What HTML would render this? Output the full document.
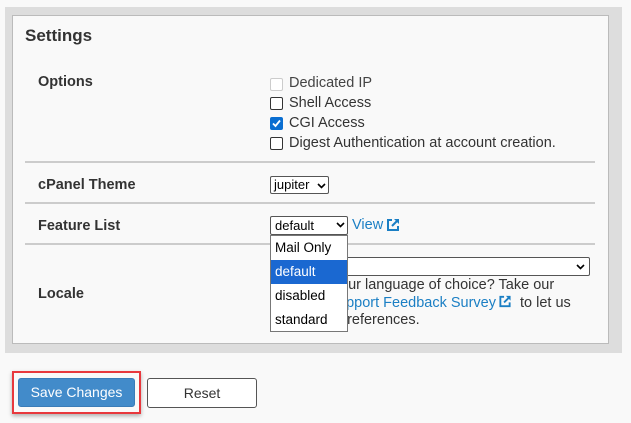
<!DOCTYPE html>
<html><head><style>
*{margin:0;padding:0;box-sizing:border-box}
body{width:631px;height:423px;background:#f9f9f9;font-family:"Liberation Sans",sans-serif;color:#333;position:relative;overflow:hidden}
.a{position:absolute;white-space:nowrap}
.t{font-size:14.5px;color:#333}
.b{font-weight:bold;font-size:14.5px;color:#333}
.cb{position:absolute;width:13px;height:13px;border:1px solid #333;border-radius:2px;background:#fff}
.ln{position:absolute;left:25px;width:570px;height:2px;background:#ccc}
.lk{color:#1b7fc4}
</style></head><body>
<div class="a" style="left:5px;top:7px;width:617px;height:346px;background:#ddd"></div>
<div class="a" style="left:12px;top:15px;width:597px;height:329px;background:#f9f9f9;border:1px solid #bbb"></div>
<div class="a b" style="left:25px;top:26px;font-size:17px">Settings</div>
<div class="a b" style="left:38px;top:74px">Options</div>
<div class="cb" style="left:270px;top:78px;border-color:#ccc"></div>
<div class="a t" style="left:289px;top:75px;color:#444">Dedicated IP</div>
<div class="cb" style="left:270px;top:97px"></div>
<div class="a t" style="left:289px;top:95px">Shell Access</div>
<div class="cb" style="left:270px;top:117px;background:#0a6ed1;border-color:#0a6ed1"><svg width="11" height="11" viewBox="0 0 11 11" style="position:absolute;left:0;top:0"><path d="M2 5.5L4.5 8L9 2.5" stroke="#fff" stroke-width="1.8" fill="none"/></svg></div>
<div class="a t" style="left:289px;top:115px">CGI Access</div>
<div class="cb" style="left:270px;top:137px"></div>
<div class="a t" style="left:289px;top:135px">Digest Authentication at account creation.</div>
<div class="ln" style="top:161px"></div>
<div class="a b" style="left:38px;top:177px">cPanel Theme</div>
<div class="a" style="left:270px;top:176px;width:59px;height:18px;border:1px solid #555;border-radius:2px;background:#fff;font-size:13px;color:#000;padding-left:3px;line-height:16px">jupiter</div>
<svg class="a" style="left:317px;top:183px" width="9" height="6"><path d="M1 1L4.5 4.5L8 1" stroke="#000" stroke-width="1.6" fill="none"/></svg>
<div class="ln" style="top:202px"></div>
<div class="a b" style="left:38px;top:218px">Feature List</div>
<div class="a" style="left:270px;top:216px;width:78px;height:19px;border:1px solid #555;border-radius:2px;background:#fff;font-size:13px;color:#000;padding-left:4px;line-height:17px">default</div>
<svg class="a" style="left:336px;top:222px" width="9" height="6"><path d="M1 1L4.5 4.5L8 1" stroke="#000" stroke-width="1.6" fill="none"/></svg>
<div class="a t lk" style="left:352px;top:217px">View</div>
<svg class="a" style="left:386px;top:218px" width="14" height="14" viewBox="0 0 14 14"><path d="M6 2H2V12H12V8" stroke="#1b7fc4" stroke-width="2" fill="none"/><path d="M8 1H13V6Z" fill="#1b7fc4"/><path d="M12 2L6 8" stroke="#1b7fc4" stroke-width="2"/></svg>
<div class="ln" style="top:243px"></div>
<div class="a b" style="left:38px;top:286px">Locale</div>
<div class="a" style="left:330px;top:257px;width:260px;height:19px;border:1px solid #555;border-radius:2px;background:#fff"></div>
<svg class="a" style="left:576px;top:264px" width="9" height="6"><path d="M1 1L4.5 4.5L8 1" stroke="#000" stroke-width="1.6" fill="none"/></svg>
<div class="a t" style="left:340px;top:277px">our language of choice? Take our</div>
<div class="a t" style="left:338px;top:295px"><span class="lk">upport Feedback Survey</span><svg width="14" height="13" viewBox="0 0 14 14" style="margin:0 4px -1px 2px"><path d="M6 2H2V12H12V8" stroke="#1b7fc4" stroke-width="2" fill="none"/><path d="M8 1H13V6Z" fill="#1b7fc4"/><path d="M12 2L6 8" stroke="#1b7fc4" stroke-width="2"/></svg> to let us</div>
<div class="a t" style="left:339px;top:312px">preferences.</div>
<div class="a" style="left:270px;top:235px;width:78px;height:97px;border:1px solid #777;background:#fff;font-size:13.5px;color:#000">
<div style="height:24px;line-height:24px;padding-left:4px">Mail Only</div>
<div style="height:24px;line-height:24px;padding-left:4px;background:#1a68d1;color:#fff">default</div>
<div style="height:24px;line-height:24px;padding-left:4px">disabled</div>
<div style="height:24px;line-height:24px;padding-left:4px">standard</div>
</div>
<div class="a" style="left:12px;top:371px;width:129px;height:43px;border:2px solid #e8383d;box-shadow:0 2px 4px rgba(0,0,0,.3)"></div>
<div class="a" style="left:18px;top:378px;width:117px;height:29px;background:#428bca;border:1px solid #3a7cb8;border-radius:3px;color:#fff;font-size:14px;text-align:center;line-height:27px">Save Changes</div>
<div class="a" style="left:147px;top:378px;width:110px;height:30px;background:#fff;border:1px solid #555;border-radius:3px;color:#333;font-size:14px;text-align:center;line-height:28px">Reset</div>
</body></html>
